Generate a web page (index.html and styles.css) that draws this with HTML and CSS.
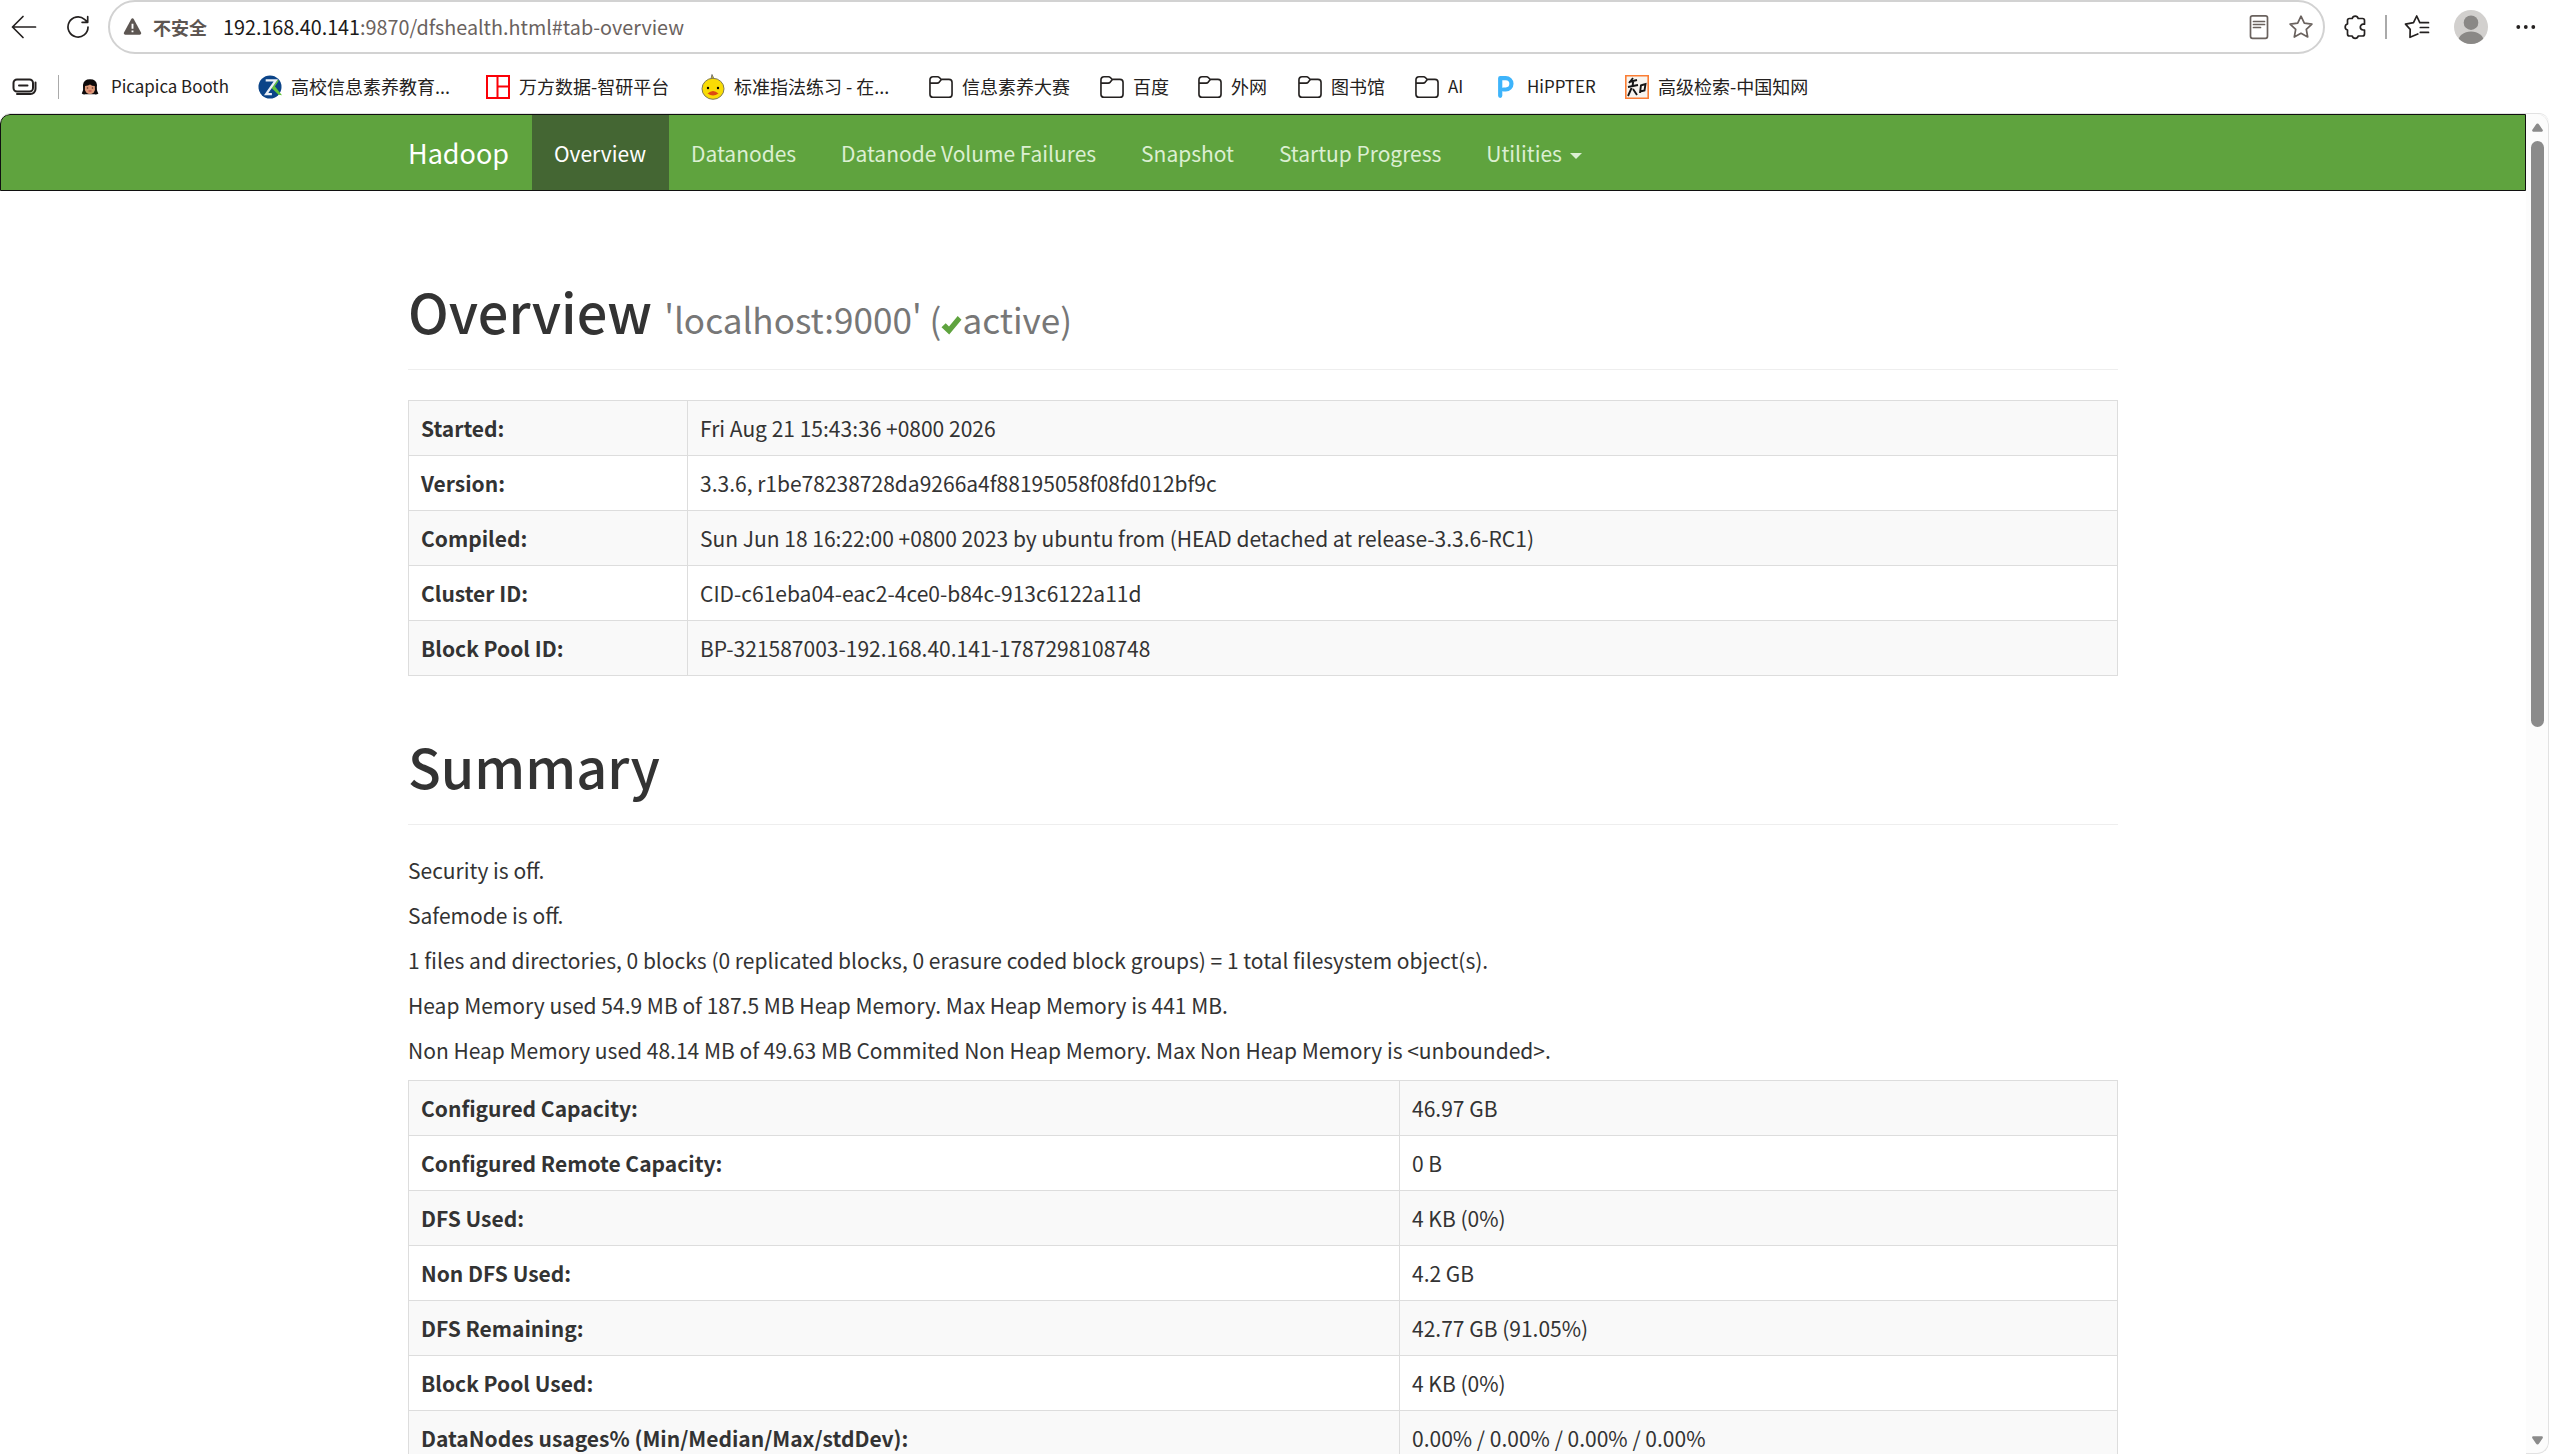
FILE: index.html
```html
<!DOCTYPE html>
<html lang="zh-CN">
<head>
<meta charset="utf-8">
<title>Namenode information</title>
<link rel="stylesheet" href="styles.css">
</head>
<body>
<div class="browser">
  <div class="toolbar">
    <svg class="ico back" width="26" height="26" viewBox="0 0 26 26"><path d="M24.500 13H1.500M12 2.500L1.500 13 12 23.500"/></svg>
    <svg class="ico reload" width="24" height="24" viewBox="0 0 24 24"><path d="M21 12A10 10 0 1 1 17.500 4.400L20.500 7M20.700 1.700v5.600h-5.600"/></svg>
    <div class="address">
      <svg class="warn" width="19" height="17" viewBox="0 0 19 18"><path d="M8.100 1.200a1.600 1.600 0 0 1 2.800 0l7.600 14.200a1.600 1.600 0 0 1-1.400 2.300H1.900a1.600 1.600 0 0 1-1.400-2.300z" fill="#5d5652"/><path d="M9.500 6v5.500M9.500 13.200v2" stroke="#fff" stroke-width="2"/></svg>
      <span class="insecure">不安全</span>
      <span class="url"><b>192.168.40.141</b>:9870/dfshealth.html#tab-overview</span>
      <svg class="ico soft reader" width="20" height="26" viewBox="0 0 20 26"><rect x="1.500" y="1.800" width="17" height="22.500" rx="2"/><path d="M4.500 7.500h11M4.500 10.500h11M4.500 13.500h7"/></svg>
      <svg class="ico soft star" width="26" height="26" viewBox="0 0 26 26"><path d="M13 2.200l3.300 7 7.600 1-5.600 5.200 1.400 7.600-6.700-3.700L6.300 23l1.400-7.600-5.600-5.200 7.600-1z"/></svg>
    </div>
    <svg class="ico puzzle" width="24" height="26" viewBox="0 0 24 26"><path d="M6.500 4.500h2.700a3.100 3.100 0 0 1 6 0h4.300a2 2 0 0 1 2 2v3.700h-1.300a2.900 2.900 0 0 0 0 5.800h1.300v4a2 2 0 0 1-2 2h-4.300a3.100 3.100 0 0 1-6 0H6.500a2 2 0 0 1-2-2v-4a3.100 3.100 0 0 1 0-6V6.500a2 2 0 0 1 2-2z"/></svg>
    <i class="sep"></i>
    <svg class="ico favs" width="26" height="26" viewBox="0 0 26 26"><path d="M15.800 8.700L12.700 2 9.500 8.700l-8 1.500 4.700 5.100-.2 8 7.800-3.300M16.300 8.700h8.200M16.300 13.500h8.200M16.300 18.400h8.200"/></svg>
    <svg class="avatar" width="34" height="34" viewBox="0 0 34 34"><defs><clipPath id="disc"><circle cx="17" cy="17" r="17"/></clipPath></defs><g clip-path="url(#disc)"><rect width="34" height="34" fill="#d2d0ce"/><circle cx="17" cy="12.700" r="7.300" fill="#8a8886"/><ellipse cx="17" cy="32" rx="13" ry="10.500" fill="#8a8886"/></g></svg>
    <svg class="dots" width="20" height="6" viewBox="0 0 20 6"><circle cx="2.300" cy="3" r="1.900"/><circle cx="9.800" cy="3" r="1.900"/><circle cx="17.300" cy="3" r="1.900"/></svg>
  </div>

  <div class="bookmarks">
    <svg class="ico tabs" width="26" height="18" viewBox="0 0 26 18"><rect x="1.500" y="1.500" width="19.500" height="12" rx="3.500" stroke-width="2"/><path d="M7 7.500h8.500" stroke-width="2"/><path d="M23.500 4.500v6.500a5 5 0 0 1-5 5H5" stroke-width="2"/></svg>
    <i class="sep thin"></i>
    <a class="bm b1"><svg width="18" height="18" viewBox="0 0 18 18"><path d="M.8 15.500Q2.800 12 2 7 2.500 1.300 9 1.300T16 7q-.8 5 1.400 8.500-2 1.500-3.800.8H4.400q-2 .5-3.600-.8z" fill="#0d0a0b"/><path d="M4 8q3.500-.2 5-1.500 2 1.500 4.800 1.500.8 4-1 6.500-3.800 3.200-7.600 0Q3.200 12 4 8z" fill="#dd9878"/><path d="M5.800 10h1.400M10.800 10h1.400" stroke="#3a2018"/><path d="M7.500 13h3" stroke="#b93c3c"/></svg>Picapica Booth</a>
    <a class="bm b2"><svg width="24" height="24" viewBox="0 0 25 25"><circle cx="12.500" cy="12.500" r="12" fill="#0b4488"/><path d="M13.500 13l3-2.500L25 21l-3.500-.5z" fill="#62c23c"/><path d="M16.500 12l4.500-6.500" stroke="#62c23c" stroke-width="1.500"/><path d="M8 5.500h10.500L8.500 20h6" fill="none" stroke="#e9eef5" stroke-width="2.400"/></svg>高校信息素养教育...</a>
    <a class="bm b3"><svg width="24" height="24" viewBox="0 0 24 24"><path d="M1 1h22v22H1zM11.500 1v22M11.500 11.500H23" fill="none" stroke="#fb0007" stroke-width="2"/></svg>万方数据-智研平台</a>
    <a class="bm b4"><svg width="24" height="26" viewBox="0 0 24 26"><path d="M10 5l1-4.500 2 4.500" fill="#e8c800" stroke="#777"/><ellipse cx="12" cy="14.800" rx="11" ry="10.500" fill="#f9dc05" stroke="#807a55"/><circle cx="7" cy="14" r="1.200"/><circle cx="17" cy="14" r="1.200"/><path d="M6.500 19.500q5.500-5 11 0-5.500 4-11 0z" fill="#dd4a12"/></svg>标准指法练习 - 在...</a>
    <a class="bm b5"><svg class="ico" width="24" height="24" viewBox="0 0 25 25"><use href="#folder"/></svg>信息素养大赛</a>
    <a class="bm b6"><svg class="ico" width="24" height="24" viewBox="0 0 25 25"><use href="#folder"/></svg>百度</a>
    <a class="bm b7"><svg class="ico" width="24" height="24" viewBox="0 0 25 25"><use href="#folder"/></svg>外网</a>
    <a class="bm b8"><svg class="ico" width="24" height="24" viewBox="0 0 25 25"><use href="#folder"/></svg>图书馆</a>
    <a class="bm b9"><svg class="ico" width="24" height="24" viewBox="0 0 25 25"><use href="#folder"/></svg>AI</a>
    <a class="bm b10"><svg width="16" height="22" viewBox="0 0 16 22"><path d="M2.200 19.800V2.200h5.600a5.500 5.500 0 0 1 0 11.300H5.500" fill="none" stroke="#3eb4fb" stroke-width="4.200" stroke-linecap="round" stroke-linejoin="round"/></svg>HiPPTER</a>
    <a class="bm b11"><svg width="24" height="24" viewBox="0 0 24 24"><path d="M.8.800h22.400v22.400H.8z" fill="#f7f4ef" stroke="#fb7d33" stroke-width="1.600"/><path d="M8 3L4 8M4 7l8-2M3 12l10-2M8.500 5l-1 6-4.500 10M8 14l4 6M16 10l-1 8M15.500 10.500l5-1.500-1 6.500-4.500 1" fill="none" stroke="#151515" stroke-width="1.900"/></svg>高级检索-中国知网</a>
  </div>
  <svg class="symbols" width="0" height="0"><symbol id="folder" viewBox="0 0 25 25"><path d="M1 9.200V5a3.200 3.200 0 0 1 3.200-3.200h4.500a3 3 0 0 1 2.300 1l1.500 1.700h8.300A3.200 3.200 0 0 1 24 7.700V20a3.200 3.200 0 0 1-3.200 3.200H4.200A3.200 3.200 0 0 1 1 20zM1 8.400h7.500a3 3 0 0 0 2.200-1l2-2.500"/></symbol></svg>

  <div class="viewport">
    <div class="page">
      <nav class="navbar">
        <div class="container nav">
          <a class="brand">Hadoop</a>
          <a class="link active">Overview</a>
          <a class="link">Datanodes</a>
          <a class="link">Datanode Volume Failures</a>
          <a class="link">Snapshot</a>
          <a class="link">Startup Progress</a>
          <a class="link">Utilities <i class="caret"></i></a>
        </div>
      </nav>
      <main class="container">
        <div class="page-header"><h1>Overview <small>'localhost:9000' (<svg class="check" width="21" height="21" viewBox="0 0 21 21"><path d="M.5 12.300l4.200-4.100 3.300 3.300L16.700 1l3.800 3.700L8.200 19.500z" fill="#5fa33e"/></svg>active)</small></h1></div>
        <table class="info">
          <tr><th>Started:</th><td>Fri Aug 21 15:43:36 +0800 2026</td></tr>
          <tr><th>Version:</th><td>3.3.6, r1be78238728da9266a4f88195058f08fd012bf9c</td></tr>
          <tr><th>Compiled:</th><td>Sun Jun 18 16:22:00 +0800 2023 by ubuntu from (HEAD detached at release-3.3.6-RC1)</td></tr>
          <tr><th>Cluster ID:</th><td>CID-c61eba04-eac2-4ce0-b84c-913c6122a11d</td></tr>
          <tr><th>Block Pool ID:</th><td>BP-321587003-192.168.40.141-1787298108748</td></tr>
        </table>
        <div class="page-header second"><h1>Summary</h1></div>
        <p>Security is off.</p>
        <p>Safemode is off.</p>
        <p>1 files and directories, 0 blocks (0 replicated blocks, 0 erasure coded block groups) = 1 total filesystem object(s).</p>
        <p>Heap Memory used 54.9 MB of 187.5 MB Heap Memory. Max Heap Memory is 441 MB.</p>
        <p>Non Heap Memory used 48.14 MB of 49.63 MB Commited Non Heap Memory. Max Non Heap Memory is &lt;unbounded&gt;.</p>
        <table class="summary">
          <tr><th>Configured Capacity:</th><td>46.97 GB</td></tr>
          <tr><th>Configured Remote Capacity:</th><td>0 B</td></tr>
          <tr><th>DFS Used:</th><td>4 KB (0%)</td></tr>
          <tr><th>Non DFS Used:</th><td>4.2 GB</td></tr>
          <tr><th>DFS Remaining:</th><td>42.77 GB (91.05%)</td></tr>
          <tr><th>Block Pool Used:</th><td>4 KB (0%)</td></tr>
          <tr><th>DataNodes usages% (Min/Median/Max/stdDev):</th><td>0.00% / 0.00% / 0.00% / 0.00%</td></tr>
        </table>
      </main>
    </div>
    <div class="scrollbar">
      <svg width="11" height="9" viewBox="0 0 11 9"><path d="M5.500.500q1 0 1.500 1L10.800 7q.4 1.500-1 1.700H1.200Q-.2 8.500.2 7L4 1.500q.5-1 1.500-1z" fill="#8b8b8b"/></svg>
      <i class="thumb"></i>
      <svg class="down" width="11" height="9" viewBox="0 0 11 9"><path d="M5.500 8.500q1 0 1.500-1L10.800 2q.4-1.500-1-1.700H1.200Q-.2.500.2 2L4 7.500q.5 1 1.500 1z" fill="#8b8b8b"/></svg>
    </div>
  </div>
</div>
</body>
</html>
```
FILE: styles.css
```css
* { box-sizing: border-box; }
body {
  margin: 0;
  background: #fff;
  color: #333;
  font: 21px/30px "Noto Sans CJK SC", sans-serif;
}
.browser {
  display: flex;
  flex-direction: column;
  width: 2549px;
  height: 1454px;
  overflow: hidden;
}

/* Browser toolbar */
.toolbar {
  display: flex;
  align-items: center;
  flex: none;
  height: 54px;
  padding-left: 11px;
}
.ico { fill: none; stroke: #242120; stroke-width: 1.7; stroke-linecap: round; stroke-linejoin: round; }
.ico.soft { stroke: #6a625e; }
.toolbar svg, .bookmarks svg { flex: none; }
.reload { margin-left: 30px; }
.address {
  display: flex;
  align-items: center;
  width: 2217px;
  height: 54px;
  margin-left: 17px;
  padding-left: 13px;
  border: 2px solid #d2d2d2;
  border-radius: 27px;
}
.warn { margin-bottom: 2px; }
.insecure { margin-left: 11px; font-size: 18px; font-weight: 700; color: #5d5652; }
.url { margin-left: 16px; font-size: 19.750px; color: #6a625e; white-space: nowrap; }
.url b { font-weight: 400; color: #1b1a19; }
.reader { margin-left: auto; }
.star { margin: 0 9px 0 19px; }
.puzzle { margin-left: 18px; }
.sep { width: 2px; height: 24px; margin-left: 18px; background: #aaa; }
.favs { margin-left: 17px; }
.avatar { margin-left: 24px; }
.dots { margin-left: 28px; fill: #242120; }

/* Bookmarks */
.bookmarks {
  display: flex;
  align-items: center;
  flex: none;
  height: 59px;
  padding: 4px 0 0 12px;
  font-size: 18px;
  line-height: 26px;
  color: #242120;
}
.tabs, .bm svg { margin-top: 2px; }
.sep.thin { flex: none; width: 1px; margin: 2px 22px 0 20px; }
.bm { display: flex; align-items: center; flex: none; white-space: nowrap; }
.bm svg { margin-right: 9px; }
.b1 { width: 177px; font-size: 16.900px; }
.b1 svg { margin-right: 12px; }
.b2 { width: 228px; }
.b3 { width: 215px; }
.b4 { width: 228px; }
.b5 { width: 171px; }
.b6 { width: 98px; }
.b7 { width: 100px; }
.b8 { width: 117px; }
.b9 { width: 83px; font-size: 16.900px; }
.b10 { width: 127px; font-size: 16.900px; }
.b10 svg { margin-right: 13px; }
.symbols { position: absolute; }

/* Page area */
.viewport {
  display: flex;
  flex: 1;
  min-height: 0;
  border-top: 1px solid #e2e2e2;
  border-radius: 10px;
  overflow: hidden;
}
.page { width: 2526px; overflow: hidden; }
.container { width: 1710px; margin: 0 auto; }
.navbar { height: 77px; border: 1px solid #101010; border-top-left-radius: 10px; background: #5fa33e; }
.nav { display: flex; }
.brand, .link { height: 75px; line-height: 30px; padding: 22.500px; white-space: nowrap; color: #dcefd2; }
.link { letter-spacing: -.02px; }
.brand { padding-left: 0; font-size: 27px; color: #fff; }
.active { background: #446633; color: #fff; }
.caret {
  display: inline-block;
  margin-left: 3px;
  vertical-align: middle;
  border: 6px solid transparent;
  border-top-color: #dcefd2;
  border-bottom: 0;
}
.page-header { height: 93px; margin: 86px 0 30px; padding-top: 4px; border-bottom: 1px solid #eee; }
.page-header.second { margin-top: 56px; }
h1 { margin: 0; font-size: 54px; line-height: 59.400px; font-weight: 500; }
small { font-size: 35.100px; line-height: 1; font-weight: 400; color: #777; }
.check { vertical-align: -2px; }
table { width: 100%; border-collapse: collapse; table-layout: fixed; border: 1px solid #ddd; }
th, td { height: 55px; padding: 12px; border: 1px solid #ddd; text-align: left; vertical-align: top; line-height: 30px; }
tr:nth-child(odd) { background: #f9f9f9; }
.info th { width: 279px; }
.summary th { width: 991px; }
p { margin: 0 0 15px; }
.scrollbar {
  display: flex;
  flex-direction: column;
  align-items: center;
  width: 23px;
  padding: 9px 0 8px;
  border: solid #e2e2e2;
  border-width: 0 1px 1px 0;
  border-radius: 0 12px 12px 0;
  background: #fcfcfc;
}
.thumb { flex: none; width: 13px; height: 586px; margin-top: 9px; border-radius: 7px; background: #8b8b8b; }
.down { margin-top: auto; }
```
